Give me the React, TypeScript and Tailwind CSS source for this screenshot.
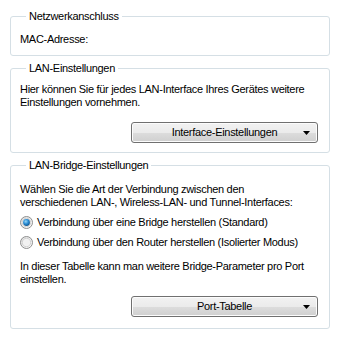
import React from "react";

function Radio({ checked }: { checked?: boolean }) {
  return (
    <svg width="13" height="13" viewBox="0 0 13 13" className="shrink-0">
      <defs>
        <linearGradient id="rOuter" x1="0" y1="0" x2="1" y2="1">
          <stop offset="0" stopColor="#dcdcdc" />
          <stop offset="1" stopColor="#ffffff" />
        </linearGradient>
        <radialGradient id="rDot" cx="0.4" cy="0.35" r="0.7">
          <stop offset="0" stopColor="#9ad8f5" />
          <stop offset="0.5" stopColor="#2b8ed6" />
          <stop offset="1" stopColor="#0d4f86" />
        </radialGradient>
      </defs>
      <circle cx="6.5" cy="6.5" r="6" fill="url(#rOuter)" stroke="#8e8f8f" strokeWidth="1" />
      <circle cx="6.5" cy="6.5" r="4.2" fill="#f1f1f1" stroke="#c9c9c9" strokeWidth="0.8" />
      {checked && <circle cx="6.5" cy="6.5" r="3.4" fill="url(#rDot)" />}
    </svg>
  );
}

function DropButton({ label }: { label: string }) {
  return (
    <button className="relative flex h-[21px] w-[187px] items-center justify-center rounded-[3px] border border-[#707070] bg-[linear-gradient(#f2f2f2_0%,#ebebeb_50%,#dddddd_50%,#cfcfcf_100%)] text-[11px] leading-[13px] tracking-[-0.3px] text-black shadow-[inset_0_0_0_1px_#fcfcfc]">
      {label}
      <svg width="7" height="4" viewBox="0 0 7 4" className="absolute right-[7px] top-[8px]">
        <path d="M0 0h7L3.5 4z" fill="#000" />
      </svg>
    </button>
  );
}

function Group({ title, children, className }: { title: string; children: React.ReactNode; className?: string }) {
  return (
    <fieldset className={"rounded-[3px] border border-[#d5dfe5] px-[9px] " + (className ?? "")}>
      <legend className="ml-[6px] px-[3px] leading-[13px]">{title}</legend>
      {children}
    </fieldset>
  );
}

export default function App() {
  return (
    <div className="h-[337px] w-[340px] overflow-hidden whitespace-nowrap bg-white px-[10px] pt-[10px] font-['Liberation_Sans',Arial,sans-serif] text-[11px] leading-[13px] tracking-[-0.3px] text-black">
      <Group title="Netzwerkanschluss" className="pb-[9px] pt-[10px]">
        <p>MAC-Adresse:</p>
      </Group>

      <Group title="LAN-Einstellungen" className="mt-[6px] pb-[9px] pt-[8px]">
        <p>
          Hier können Sie für jedes LAN-Interface Ihres Gerätes weitere
          <br />
          Einstellungen vornehmen.
        </p>
        <div className="mt-[13px] flex justify-end pr-[2px]">
          <DropButton label="Interface-Einstellungen" />
        </div>
      </Group>

      <Group title="LAN-Bridge-Einstellungen" className="mt-[6px] pb-[11px] pt-[11px]">
        <p>
          Wählen Sie die Art der Verbindung zwischen den
          <br />
          verschiedenen LAN-, Wireless-LAN- und Tunnel-Interfaces:
        </p>
        <div className="mt-[3px] flex flex-col">
          <label className="flex h-[20px] items-center gap-[4px]">
            <Radio checked />
            <span>Verbindung über eine Bridge herstellen (Standard)</span>
          </label>
          <label className="flex h-[20px] items-center gap-[4px]">
            <Radio />
            <span>Verbindung über den Router herstellen (Isolierter Modus)</span>
          </label>
        </div>
        <p className="mt-[8px]">
          In dieser Tabelle kann man weitere Bridge-Parameter pro Port
          <br />
          einstellen.
        </p>
        <div className="mt-[10px] flex justify-end pr-[2px]">
          <DropButton label="Port-Tabelle" />
        </div>
      </Group>
    </div>
  );
}
